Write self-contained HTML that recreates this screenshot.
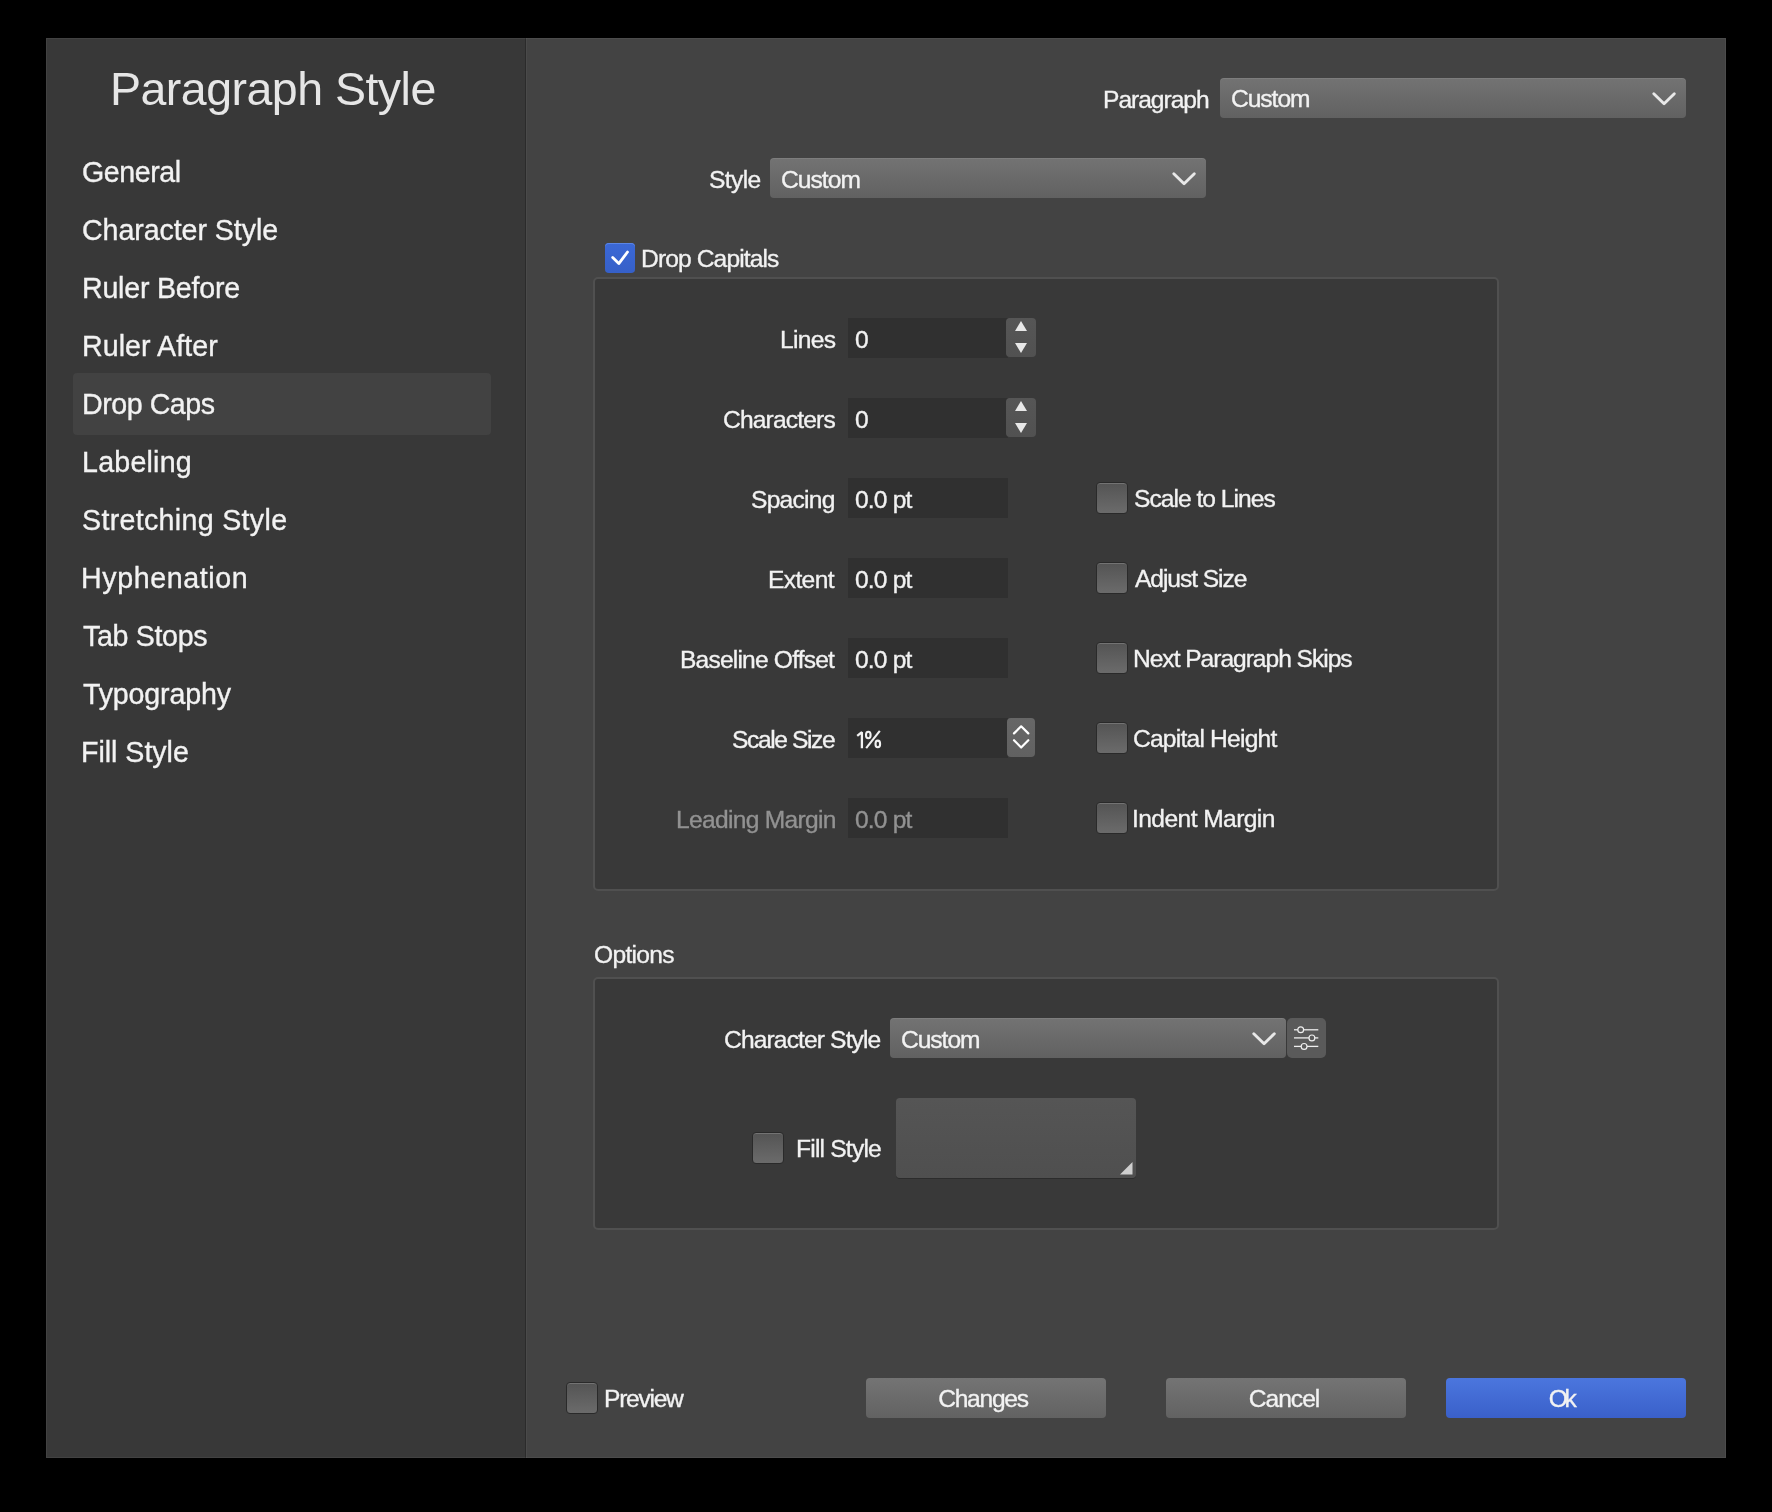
<!DOCTYPE html>
<html><head><meta charset="utf-8"><style>
html,body{margin:0;padding:0;background:#000;width:1772px;height:1512px;overflow:hidden;}
.b{position:absolute;}
.t{position:absolute;font-family:"Liberation Sans",sans-serif;line-height:1;white-space:nowrap;will-change:transform;-webkit-text-stroke:0.35px currentColor;}
svg{position:absolute;left:0;top:0;}
</style></head><body>
<div class="b" style="left:46px;top:38px;width:479px;height:1420px;background:#383838;"></div><div class="b" style="left:525px;top:38px;width:1px;height:1420px;background:#2b2b2b;"></div><div class="b" style="left:526px;top:38px;width:1200px;height:1420px;background:#434343;"></div><div class="b" style="left:46px;top:38px;width:1680px;height:1420px;box-shadow:inset 0 0 0 1px rgba(255,255,255,0.05);"></div><div class="b" style="left:526px;top:38px;width:1px;height:1420px;background:rgba(255,255,255,0.04);"></div><div class="b" style="left:73px;top:373px;width:418px;height:62px;background:#424242;border-radius:4px;"></div><div class="b" style="left:1220px;top:78px;width:466px;height:40px;background:linear-gradient(#737373,#616161);border-radius:4px;box-shadow:inset 0 1px 0 rgba(255,255,255,0.08);"></div><div class="b" style="left:770px;top:158px;width:436px;height:40px;background:linear-gradient(#737373,#616161);border-radius:4px;box-shadow:inset 0 1px 0 rgba(255,255,255,0.08);"></div><div class="b" style="left:605px;top:243px;width:30px;height:30px;background:linear-gradient(#3b68d6,#3660c8);border-radius:4px;box-shadow:inset 0 1px 0 #5b86e6;"></div><div class="b" style="left:593px;top:277px;width:906px;height:614px;background:#393939;border:2px solid #505050;border-radius:5px;box-sizing:border-box;"></div><div class="b" style="left:593px;top:977px;width:906px;height:253px;background:#393939;border:2px solid #505050;border-radius:5px;box-sizing:border-box;"></div><div class="b" style="left:848px;top:318px;width:160px;height:40px;background:#303030;"></div><div class="b" style="left:848px;top:398px;width:160px;height:40px;background:#303030;"></div><div class="b" style="left:848px;top:478px;width:160px;height:40px;background:#303030;"></div><div class="b" style="left:848px;top:558px;width:160px;height:40px;background:#303030;"></div><div class="b" style="left:848px;top:638px;width:160px;height:40px;background:#303030;"></div><div class="b" style="left:848px;top:718px;width:160px;height:40px;background:#303030;"></div><div class="b" style="left:848px;top:798px;width:160px;height:40px;background:#303030;"></div><div class="b" style="left:1006px;top:318px;width:30px;height:39px;background:linear-gradient(#565656,#515151);border-radius:4px;"></div><div class="b" style="left:1006px;top:398px;width:30px;height:39px;background:linear-gradient(#565656,#515151);border-radius:4px;"></div><div class="b" style="left:1007px;top:718px;width:28px;height:39px;background:linear-gradient(#676767,#616161);border-radius:4px;"></div><div class="b" style="left:1096px;top:482px;width:32px;height:32px;background:linear-gradient(#545454,#6b6b6b);border:1px solid #2a2a2a;border-radius:4px;box-sizing:border-box;box-shadow:inset 0 1px 0 #737373;"></div><div class="b" style="left:1096px;top:562px;width:32px;height:32px;background:linear-gradient(#545454,#6b6b6b);border:1px solid #2a2a2a;border-radius:4px;box-sizing:border-box;box-shadow:inset 0 1px 0 #737373;"></div><div class="b" style="left:1096px;top:642px;width:32px;height:32px;background:linear-gradient(#545454,#6b6b6b);border:1px solid #2a2a2a;border-radius:4px;box-sizing:border-box;box-shadow:inset 0 1px 0 #737373;"></div><div class="b" style="left:1096px;top:722px;width:32px;height:32px;background:linear-gradient(#545454,#6b6b6b);border:1px solid #2a2a2a;border-radius:4px;box-sizing:border-box;box-shadow:inset 0 1px 0 #737373;"></div><div class="b" style="left:1096px;top:802px;width:32px;height:32px;background:linear-gradient(#545454,#6b6b6b);border:1px solid #2a2a2a;border-radius:4px;box-sizing:border-box;box-shadow:inset 0 1px 0 #737373;"></div><div class="b" style="left:890px;top:1018px;width:396px;height:40px;background:linear-gradient(#737373,#616161);border-radius:4px;box-shadow:inset 0 1px 0 rgba(255,255,255,0.08);"></div><div class="b" style="left:1287px;top:1018px;width:39px;height:40px;background:#5a5a5a;border-radius:5px;"></div><div class="b" style="left:752px;top:1132px;width:32px;height:32px;background:linear-gradient(#545454,#6b6b6b);border:1px solid #2a2a2a;border-radius:4px;box-sizing:border-box;box-shadow:inset 0 1px 0 #737373;"></div><div class="b" style="left:896px;top:1098px;width:240px;height:80px;background:linear-gradient(#555555,#4f4f4f);border-radius:4px;box-shadow:0 1px 0 #2c2c2c;"></div><div class="b" style="left:566px;top:1382px;width:32px;height:32px;background:linear-gradient(#545454,#6b6b6b);border:1px solid #2a2a2a;border-radius:4px;box-sizing:border-box;box-shadow:inset 0 1px 0 #737373;"></div><div class="b" style="left:866px;top:1378px;width:240px;height:40px;background:linear-gradient(#747474,#626262);border-radius:4px;"></div><div class="b" style="left:1166px;top:1378px;width:240px;height:40px;background:linear-gradient(#747474,#626262);border-radius:4px;"></div><div class="b" style="left:1446px;top:1378px;width:240px;height:40px;background:linear-gradient(#4b76de,#3a60ca);border-radius:4px;"></div>
<svg width="1772" height="1512" viewBox="0 0 1772 1512"><polyline points="1653.8,93.7 1664.05,103.7 1674.3,93.7" fill="none" stroke="#e8e8e8" stroke-width="2.9" stroke-linecap="round" stroke-linejoin="round"/><polyline points="1173.8,173.7 1184.05,183.7 1194.3,173.7" fill="none" stroke="#e8e8e8" stroke-width="2.9" stroke-linecap="round" stroke-linejoin="round"/><polyline points="1253.8,1033.7 1264.05,1043.7 1274.3,1033.7" fill="none" stroke="#e8e8e8" stroke-width="2.9" stroke-linecap="round" stroke-linejoin="round"/><polyline points="612.7,257.6 618.8,263.6 627.5,252" fill="none" stroke="#fff" stroke-width="2.8" stroke-linecap="round" stroke-linejoin="round"/><polygon points="1015,331 1021,321 1027,331" fill="#e8e8e8"/><polygon points="1015,343 1021,353 1027,343" fill="#e8e8e8"/><polygon points="1015,411 1021,401 1027,411" fill="#e8e8e8"/><polygon points="1015,423 1021,433 1027,423" fill="#e8e8e8"/><polyline points="1014,733.4 1021.15,726.3 1028.3,733.4" fill="none" stroke="#fff" stroke-width="2.2" stroke-linecap="round" stroke-linejoin="round"/><polyline points="1014,740.2 1021.15,747.5 1028.3,740.2" fill="none" stroke="#fff" stroke-width="2.2" stroke-linecap="round" stroke-linejoin="round"/><line x1="1294" y1="1029.8" x2="1318.3" y2="1029.8" stroke="#eee" stroke-width="1.3"/><circle cx="1300.7" cy="1029.8" r="2.9" fill="#5a5a5a" stroke="#eee" stroke-width="1.2"/><line x1="1294" y1="1037.9" x2="1318.3" y2="1037.9" stroke="#eee" stroke-width="1.3"/><circle cx="1311.9" cy="1037.9" r="2.9" fill="#5a5a5a" stroke="#eee" stroke-width="1.2"/><line x1="1294" y1="1046.4" x2="1318.3" y2="1046.4" stroke="#eee" stroke-width="1.3"/><circle cx="1304.1" cy="1046.4" r="2.9" fill="#5a5a5a" stroke="#eee" stroke-width="1.2"/><g fill="none" stroke="#f2f2f2" stroke-width="2.3" stroke-linecap="butt"><polyline points="857.2,735.9 861.9,732.2 861.9,748.3" stroke-linejoin="bevel"/><ellipse cx="868.3" cy="735" rx="2.3" ry="3.3" stroke-width="2.1"/><ellipse cx="877.8" cy="743.9" rx="2.3" ry="3.3" stroke-width="2.1"/><line x1="866.2" y1="748.2" x2="879.8" y2="730.8" stroke-width="2.1"/></g><polygon points="1120,1174.5 1132.5,1174.5 1132.5,1162" fill="#cfcfcf"/></svg>
<div class="t" id="title" style="top:65.64px;font-size:46.5px;color:#e6e6e6;letter-spacing:-0.514px;-webkit-text-stroke:0;left:110.40px;">Paragraph Style</div><div class="t" id="sb0" style="top:158.09px;font-size:28.6px;color:#f2f2f2;letter-spacing:-0.433px;left:82.10px;">General</div><div class="t" id="sb1" style="top:216.09px;font-size:28.6px;color:#f2f2f2;letter-spacing:-0.071px;left:82.10px;">Character Style</div><div class="t" id="sb2" style="top:274.09px;font-size:28.6px;color:#f2f2f2;letter-spacing:-0.218px;left:81.70px;">Ruler Before</div><div class="t" id="sb3" style="top:332.09px;font-size:28.6px;color:#f2f2f2;letter-spacing:0.060px;left:81.70px;">Ruler After</div><div class="t" id="sb4" style="top:390.09px;font-size:28.6px;color:#f2f2f2;letter-spacing:-0.450px;left:81.70px;">Drop Caps</div><div class="t" id="sb5" style="top:448.09px;font-size:28.6px;color:#f2f2f2;letter-spacing:0.229px;left:81.70px;">Labeling</div><div class="t" id="sb6" style="top:506.09px;font-size:28.6px;color:#f2f2f2;letter-spacing:0.320px;left:81.70px;">Stretching Style</div><div class="t" id="sb7" style="top:564.09px;font-size:28.6px;color:#f2f2f2;letter-spacing:0.620px;left:80.70px;">Hyphenation</div><div class="t" id="sb8" style="top:622.09px;font-size:28.6px;color:#f2f2f2;letter-spacing:-0.325px;left:82.70px;">Tab Stops</div><div class="t" id="sb9" style="top:680.09px;font-size:28.6px;color:#f2f2f2;letter-spacing:-0.156px;left:82.70px;">Typography</div><div class="t" id="sb10" style="top:738.09px;font-size:28.6px;color:#f2f2f2;letter-spacing:-0.022px;left:80.70px;">Fill Style</div><div class="t" id="lblPara" style="top:87.98px;font-size:24.6px;color:#f2f2f2;letter-spacing:-1.025px;left:1102.90px;">Paragraph</div><div class="t" id="popPara" style="top:87.18px;font-size:24.6px;color:#f2f2f2;letter-spacing:-1.040px;left:1231.40px;">Custom</div><div class="t" id="lblStyle" style="top:167.98px;font-size:24.6px;color:#f2f2f2;letter-spacing:-0.600px;left:708.70px;">Style</div><div class="t" id="popStyle" style="top:167.58px;font-size:24.6px;color:#f2f2f2;letter-spacing:-0.960px;left:781.40px;">Custom</div><div class="t" id="dropcap" style="top:247.08px;font-size:24.6px;color:#f2f2f2;letter-spacing:-0.883px;left:641.10px;">Drop Capitals</div><div class="t" id="lbl0" style="top:327.98px;font-size:24.6px;color:#f2f2f2;letter-spacing:-0.700px;right:937.00px;">Lines</div><div class="t" id="val0" style="top:327.98px;font-size:24.6px;color:#f2f2f2;letter-spacing:0.000px;left:855.20px;">0</div><div class="t" id="lbl1" style="top:407.98px;font-size:24.6px;color:#f2f2f2;letter-spacing:-0.844px;right:937.00px;">Characters</div><div class="t" id="val1" style="top:407.98px;font-size:24.6px;color:#f2f2f2;letter-spacing:0.000px;left:855.20px;">0</div><div class="t" id="lbl2" style="top:488.48px;font-size:24.6px;color:#f2f2f2;letter-spacing:-0.733px;right:937.00px;">Spacing</div><div class="t" id="val2" style="top:488.48px;font-size:24.6px;color:#f2f2f2;letter-spacing:-0.840px;left:855.20px;">0.0 pt</div><div class="t" id="lbl3" style="top:568.48px;font-size:24.6px;color:#f2f2f2;letter-spacing:-0.640px;right:938.00px;">Extent</div><div class="t" id="val3" style="top:568.48px;font-size:24.6px;color:#f2f2f2;letter-spacing:-0.840px;left:855.20px;">0.0 pt</div><div class="t" id="lbl4" style="top:648.48px;font-size:24.6px;color:#f2f2f2;letter-spacing:-0.814px;right:938.00px;">Baseline Offset</div><div class="t" id="val4" style="top:648.48px;font-size:24.6px;color:#f2f2f2;letter-spacing:-0.840px;left:855.20px;">0.0 pt</div><div class="t" id="lbl5" style="top:728.48px;font-size:24.6px;color:#f2f2f2;letter-spacing:-1.400px;right:938.00px;">Scale Size</div><div class="t" id="lbl6" style="top:808.48px;font-size:24.6px;color:#929292;letter-spacing:-0.692px;right:936.00px;">Leading Margin</div><div class="t" id="val6" style="top:808.48px;font-size:24.6px;color:#929292;letter-spacing:-0.840px;left:855.20px;">0.0 pt</div><div class="t" id="cb0" style="top:486.98px;font-size:24.6px;color:#f2f2f2;letter-spacing:-0.985px;left:1133.60px;">Scale to Lines</div><div class="t" id="cb1" style="top:566.98px;font-size:24.6px;color:#f2f2f2;letter-spacing:-1.060px;left:1134.60px;">Adjust Size</div><div class="t" id="cb2" style="top:646.98px;font-size:24.6px;color:#f2f2f2;letter-spacing:-1.032px;left:1133.20px;">Next Paragraph Skips</div><div class="t" id="cb3" style="top:726.98px;font-size:24.6px;color:#f2f2f2;letter-spacing:-0.785px;left:1133.20px;">Capital Height</div><div class="t" id="cb4" style="top:806.98px;font-size:24.6px;color:#f2f2f2;letter-spacing:-0.583px;left:1132.20px;">Indent Margin</div><div class="t" id="options" style="top:942.78px;font-size:24.6px;color:#f2f2f2;letter-spacing:-0.700px;left:594.10px;">Options</div><div class="t" id="lblCS" style="top:1028.08px;font-size:24.6px;color:#f2f2f2;letter-spacing:-0.871px;left:723.80px;">Character Style</div><div class="t" id="popCS" style="top:1027.58px;font-size:24.6px;color:#f2f2f2;letter-spacing:-1.040px;left:900.90px;">Custom</div><div class="t" id="fill" style="top:1137.08px;font-size:24.6px;color:#f2f2f2;letter-spacing:-0.800px;left:796.40px;">Fill Style</div><div class="t" id="preview" style="top:1386.88px;font-size:24.6px;color:#f2f2f2;letter-spacing:-1.267px;left:603.60px;">Preview</div><div class="t" id="btnChanges" style="top:1387.08px;font-size:24.6px;color:#f2f2f2;letter-spacing:-1.267px;left:863.00px;width:240px;text-align:center;">Changes</div><div class="t" id="btnCancel" style="top:1387.08px;font-size:24.6px;color:#f2f2f2;letter-spacing:-1.000px;left:1163.90px;width:240px;text-align:center;">Cancel</div><div class="t" id="btnOk" style="top:1387.08px;font-size:24.6px;color:#f2f2f2;letter-spacing:-3.400px;left:1441.10px;width:240px;text-align:center;">Ok</div>
</body></html>
